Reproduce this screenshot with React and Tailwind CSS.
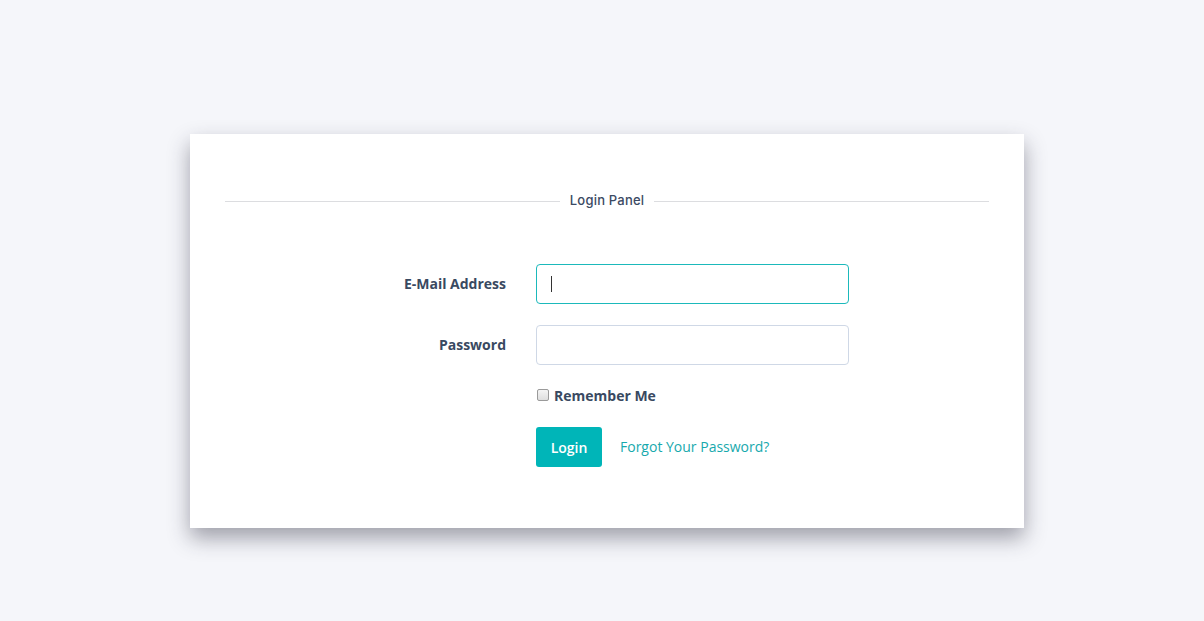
export default function App() {
  return (
    <div className="min-h-[621px] w-full bg-[#f5f6fa] pt-[134px]" style={{ fontFamily: '"Open Sans", sans-serif' }}>
      <div className="ml-[190px] w-[834px] bg-white px-[35px] pt-[57px] pb-[61px] shadow-[0_10px_20px_rgba(40,40,60,0.42)]">
        <div className="flex items-center h-[20px]">
          <div className="flex-1 h-px bg-[#dcdde0]" />
          <span className="px-[10px] text-[13px] font-medium tracking-[0.2px] text-[#3b4a63]" style={{ fontFamily: 'Inter, sans-serif' }}>
            Login Panel
          </span>
          <div className="flex-1 h-px bg-[#dcdde0]" />
        </div>

        <form className="mt-[53px] flex flex-col">
          <div className="flex items-center gap-[30px]">
            <label className="w-[281px] pb-[2px] text-right text-[14px] font-bold text-[#394961]">E-Mail Address</label>
            <div className="relative w-[313px]">
              <input type="email" className="block w-full h-[40px] rounded-[4px] border border-[#1bb9bb] bg-white px-[14px] outline-none" />
              <span className="absolute left-[15px] top-[12px] h-[16px] w-px bg-[#333]" />
            </div>
          </div>
          <div className="mt-[21px] flex items-center gap-[30px]">
            <label className="w-[281px] pb-[2px] text-right text-[14px] font-bold text-[#394961]">Password</label>
            <input type="password" className="block w-[313px] h-[40px] rounded-[4px] border border-[#cfd8e6] bg-white px-[14px] outline-none" />
          </div>
          <div className="mt-[20px] ml-[311px] flex items-center h-[20px]">
            <span className="inline-block w-[12px] h-[12px] ml-px rounded-[2px] border border-[#9a9a9a] bg-gradient-to-b from-[#f4f4f4] to-[#dedede]" />
            <span className="ml-[5px] text-[14px] font-bold text-[#394961]">Remember Me</span>
          </div>
          <div className="mt-[22px] ml-[311px] flex items-center">
            <button type="button" className="h-[40px] w-[66px] rounded-[3px] bg-[#00b5b8] text-[14px] font-semibold text-white">
              Login
            </button>
            <a className="ml-[18px] pb-[2px] text-[14px] text-[#17a9ad]">Forgot Your Password?</a>
          </div>
        </form>
      </div>
    </div>
  );
}
